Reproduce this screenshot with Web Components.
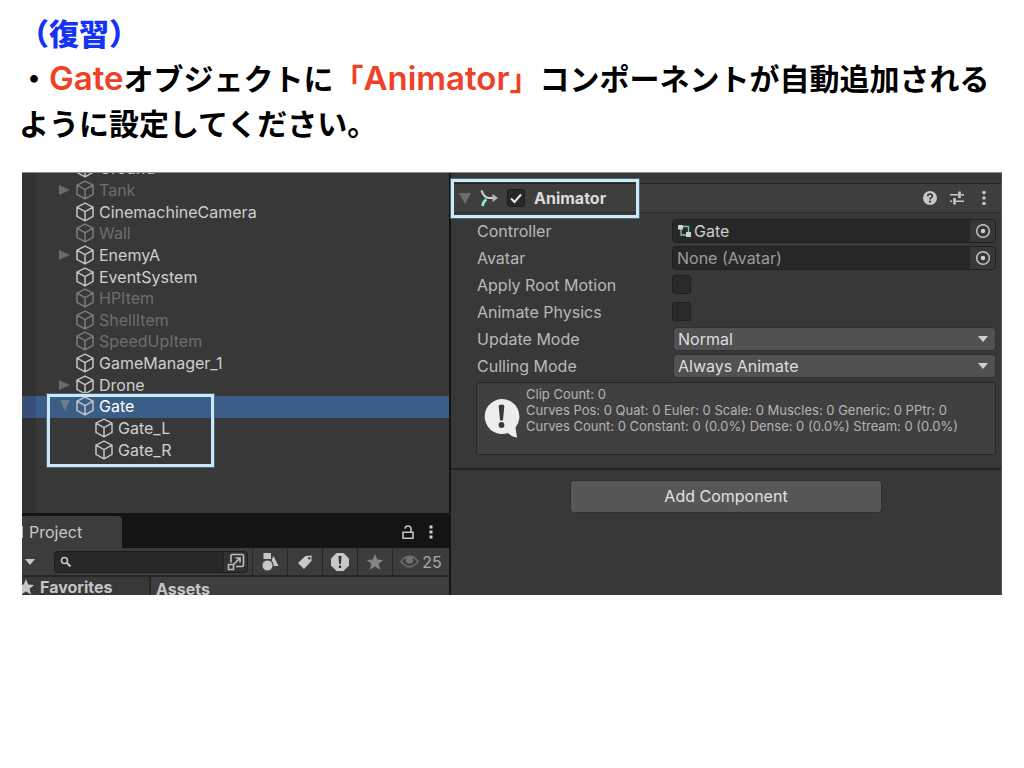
<!DOCTYPE html>
<html lang="ja">
<head>
<meta charset="utf-8">
<meta name="viewport" content="width=device-width, initial-scale=1">
<title>Animator コンポーネント</title>
<style>
  body { margin: 0; background: #fff; }
</style>
</head>
<body>
<lesson-slide>
  <lesson-note>
    <p><strong class="topic">（復習）</strong></p>
    <p>・<em>Gate</em>オブジェクトに<em>「Animator」</em>コンポーネントが自動追加されるように設定してください。</p>
  </lesson-note>
  <editor-window>
    <hierarchy-panel slot="hierarchy"></hierarchy-panel>
    <project-panel slot="project"></project-panel>
    <inspector-panel slot="inspector"></inspector-panel>
  </editor-window>
</lesson-slide>

<script>
const define = (name, html, setup) => {
  const template = document.createElement('template');
  template.innerHTML = `<style>*{box-sizing:border-box}</style>${html}`;
  customElements.define(name, class extends HTMLElement {
    connectedCallback() {
      if (this.shadowRoot) return;
      const root = this.attachShadow({ mode: 'open' });
      root.append(template.content.cloneNode(true));
      if (setup) setup(this, root);
    }
  });
};

define('lesson-slide', `
<style>
  :host { display: flex; flex-direction: column; gap: 27px; padding: 10px 22px 24px; }
</style>
<slot></slot>`);

define('lesson-note', `
<style>
  :host { display: block; margin: 0 -3px; color: #000; text-spacing-trim: space-all;
    font: 700 30px/45px "Noto Sans CJK JP", sans-serif; }
  ::slotted(p) { margin: 0; }
</style>
<slot></slot>`, host => {
  for (const el of host.querySelectorAll('em')) {
    el.style.cssText = 'font-style:normal;font-weight:600;font-size:33px;line-height:1;color:#ee4126;font-family:Inter,"Noto Sans CJK JP",sans-serif';
    el.innerHTML = el.textContent.replace(/[「」]/g, '<span style="font-size:30px;font-weight:700">$&</span>');
  }
  host.querySelector('.topic').style.color = '#1433f5';
});

define('editor-window', `
<style>
  :host { display: grid; grid-template-columns: minmax(0, 427fr) minmax(0, 551fr); column-gap: 2px;
    background: #141414; border-top: 1px solid #8c8c8c; overflow: hidden;
    font: 400 16px/20px Inter, sans-serif; color: #c8c8c8; }
  .left, .right { display: flex; flex-direction: column; min-width: 0; }
  .left slot, .right slot { display: flex; flex-direction: column; }
  slot[name=hierarchy], slot[name=inspector] { flex: 1; }
</style>
<div class="left"><slot name="hierarchy"></slot><slot name="project"></slot></div>
<div class="right"><slot name="inspector"></slot></div>`);

define('tree-row', `
<style>
  :host { flex: 1; display: flex; align-items: center; gap: 5px; padding: 0 0 1px 37px; min-height: 0; color: #cfcfcf; white-space: nowrap;
    background: linear-gradient(90deg, #323232 14px, #383838 14px); }
  :host([off]) { color: #6e6e6e; }
  :host([child]) { padding-left: 56px; }
  :host([selected]) { color: #fff; background: linear-gradient(90deg, #384f7a 14px, #3a5e87 14px); }
  svg { flex: none; display: block; }
  .cube { stroke: #c4c4c4; }
  :host([off]) .cube { stroke: #7c7c7c; }
  .arrow { visibility: hidden; fill: #6c6c6c; }
  :host([fold]) .arrow { visibility: visible; }
  :host([fold=open]) .arrow { transform: rotate(90deg); fill: #6a7b8b; }
</style>
<svg class="arrow" width="12" height="12"><path d="M0 1L11 6L0 11Z"/></svg>
<svg class="cube" width="18" height="20" fill="none" stroke-width="1.5" stroke-linejoin="round"><path d="M9 1.2L17 5.2V14.4L9 18.8L1 14.4V5.2ZM1 5.2L9 9.6L17 5.2M9 9.6V18.8"/></svg>
<slot></slot>`);

define('hierarchy-panel', `
<style>
  :host { display: flex; flex-direction: column; flex: 1; position: relative; overflow: hidden;
    background: linear-gradient(90deg, #323232 14px, #383838 14px); }
  .tree { display: flex; flex-direction: column; height: 303px; margin: -15px 0 52px; }
  .mark { position: absolute; left: 25px; top: 221px; width: 167px; height: 73px;
    border: 3px solid #c8eaf8; outline: 1px solid #4d6572; }
</style>
<div class="tree">
  <tree-row>Ground</tree-row>
  <tree-row off fold="closed">Tank</tree-row>
  <tree-row>CinemachineCamera</tree-row>
  <tree-row off>Wall</tree-row>
  <tree-row fold="closed">EnemyA</tree-row>
  <tree-row>EventSystem</tree-row>
  <tree-row off>HPItem</tree-row>
  <tree-row off>ShellItem</tree-row>
  <tree-row off>SpeedUpItem</tree-row>
  <tree-row>GameManager_1</tree-row>
  <tree-row fold="closed">Drone</tree-row>
  <tree-row selected fold="open">Gate</tree-row>
  <tree-row child>Gate_L</tree-row>
  <tree-row child>Gate_R</tree-row>
</div>
<div class="mark"></div>`);

define('project-panel', `
<style>
  :host { display: block; background: #141414; }
  button { font: inherit; color: inherit; background: none; border: 0; padding: 0; margin: 0;
    display: flex; align-items: center; justify-content: center; }
  svg { display: block; flex: none; }
  .tabs { display: flex; align-items: center; height: 35px; padding: 3px 11px 0 0; gap: 8px; }
  .tab { width: 100px; height: 32px; background: #3c3c3c; border-radius: 0 4px 0 0; justify-content: flex-start; gap: 6px; margin-right: auto; }
  .tab i { width: 1px; height: 12px; background: #b4b4b4; }
  .bar { display: flex; height: 27px; background: #3c3c3c; align-items: stretch; }
  .create { width: 16px; }
  .search { flex: 1; min-width: 0; display: flex; align-items: center; margin: 3px 4px 3px 16px; height: 22px;
    background: #282828; border: 1px solid #1c1c1c; border-radius: 4px; padding-left: 5px; overflow: hidden; }
  input { flex: 1; min-width: 0; font: inherit; color: inherit; background: none; border: 0; padding: 0 4px; outline: 0; }
  .pick { width: 24px; height: 20px; background: #323232; border-left: 1px solid #222; }
  .tool { width: 35px; border-left: 1px solid #262626; }
  .eye { width: 57px; gap: 3px; color: #a8a8a8; }
  .body { display: grid; grid-template-columns: 127px 1fr; height: 20px; overflow: hidden; border-top: 2px solid #272727; background: #3e3e3e;
    font-weight: 700; color: #c6c6c6; }
  .fav { display: flex; gap: 3px; align-items: center; background: #383838; overflow: hidden; padding-bottom: 2px; }
  .assets { border-left: 2px solid #272727; padding: 2px 0 0 5px; }
</style>
<div class="tabs">
  <button class="tab"><i></i>Project</button>
  <button aria-label="Lock"><svg width="16" height="16" fill="none" stroke="#c4c4c4" stroke-width="1.6"><path d="M3 8.2H13V14.2H3ZM5 4.6Q5.200 2 8 2Q11 2 11 5V8"/></svg></button>
  <button aria-label="Menu"><svg width="14" height="16" fill="#d0d0d0"><path d="M5.500 1.500h3v3h-3zM5.500 6.500h3v3h-3zM5.500 11.500h3v3h-3z"/></svg></button>
</div>
<div class="bar">
  <button class="create" aria-label="Create"><svg width="10" height="6"><path d="M0 0H10L5 6Z" fill="#c8c8c8"/></svg></button>
  <div class="search">
    <svg width="12" height="12" fill="none" stroke="#c8c8c8" stroke-width="1.6"><circle cx="4.500" cy="4.500" r="3"/><path d="M7 7L10.500 10.500" stroke-width="2"/></svg>
    <input type="search" aria-label="Search">
    <button class="pick" aria-label="Open search"><svg width="18" height="18" fill="none" stroke="#bdbdbd" stroke-width="1.6"><path d="M4 9.500V2.500Q4 1.500 5 1.500H15Q16.500 1.500 16.500 3V12Q16.500 13.500 15 13.500H9M1.500 11.500H6.500V16.500H1.500ZM6.500 11.500L12.500 5.500M8.500 5H13V9.500"/></svg></button>
  </div>
  <button class="tool" aria-label="Type filter"><svg width="18" height="18" fill="#c8c8c8"><path d="M2.500 0H10V6H2.500Z"/><circle cx="6.500" cy="12.500" r="5.500" stroke="#3c3c3c"/><path d="M12.500 3L17.500 13H12.500Q12.500 9 10.500 7Z"/></svg></button>
  <button class="tool" aria-label="Label filter"><svg width="16" height="16"><path fill="#c8c8c8" fill-rule="evenodd" d="M1 9L8.500 2L14.500 1.500V7L7 15ZM12.200 3a1.300 1.300 0 1 0 .1 0Z"/></svg></button>
  <button class="tool" aria-label="Log filter"><svg width="20" height="20"><path fill="#c8c8c8" d="M6.500 1H13.500L19 6.500V13.500L13.500 19H6.500L1 13.500V6.500Z"/><path fill="#333" d="M8.500 4h3l-.6 8h-1.800zM8.800 13.500h2.400v2.400h-2.400z"/></svg></button>
  <button class="tool" aria-label="Favorites"><svg width="18" height="18" fill="#858585"><path d="M9 1L11.300 6.500L17.200 6.900L12.700 10.800L14.200 16.700L9 13.500L3.800 16.700L5.300 10.800L.8 6.900L6.700 6.500Z"/></svg></button>
  <button class="tool eye" aria-label="Hidden packages"><svg width="19" height="13"><path d="M.8 6.500Q9.500 -4 18.200 6.500Q9.500 17 .8 6.500Z" fill="none" stroke="#707070" stroke-width="1.3"/><circle cx="9.500" cy="5" r="3.800" fill="#707070"/></svg>25</button>
</div>
<div class="body">
  <div class="fav"><svg width="15" height="16" fill="#c8c8c8"><path d="M4 0L6.200 5.500L12 5.900L7.600 9.700L9 15.500L4 12.400L-1 15.500L0 10V5.700L1.700 5.500Z"/></svg>Favorites</div>
  <div class="assets">Assets</div>
</div>`);

/* One label and one control per line; the three field types share this frame. */
const fieldCss = `<style>
  :host { display: grid; grid-template-columns: 195px minmax(0, 1fr); align-items: center; height: 27px; color: #b8b8b8; }
  .box { display: flex; align-items: center; height: 24px; background: #282828; border: 1px solid #202020; border-radius: 4px; padding-left: 4px; overflow: hidden; }
  input, select, button { font: inherit; color: inherit; margin: 0; border: 0; background: none; }
</style>`;

define('object-field', `${fieldCss}
<style>
  input { flex: 1; min-width: 0; padding: 0; outline: 0; color: #9c9c9c; height: 20px; }
  .icon { display: none; margin: 0 2px 0 1px; flex: none; }
  :host([asset]) .icon { display: block; }
  :host([asset]) input { color: #cecece; }
  button { width: 25px; height: 22px; padding: 0; background: #373737; display: flex; align-items: center; justify-content: center; }
</style>
<label for="f"></label>
<div class="box">
  <svg class="icon" width="14" height="14"><path d="M5 2.500H10.500V8M3 5V11H9" fill="none" stroke="#6ccdb4" stroke-width="1.300"/><path d="M0 1h5v4.500H0zM8 8h5v5H8z" fill="#d0d0d0"/></svg>
  <input id="f" type="text" readonly>
  <button aria-label="Select object"><svg width="16" height="16" fill="none"><circle cx="8" cy="8" r="6.300" stroke="#c4c4c4" stroke-width="1.500"/><circle cx="8" cy="8" r="2.200" fill="#d0d0d0"/></svg></button>
</div>`, (host, root) => {
  root.querySelector('label').textContent = host.getAttribute('label');
  root.querySelector('input').value = host.getAttribute('value');
});

define('toggle-field', `${fieldCss}
<style>
  input { appearance: none; width: 19px; height: 19px; background: #2a2a2a; border: 1px solid #1f1f1f; border-radius: 3px; }
</style>
<label for="f"></label><input id="f" type="checkbox">`, (host, root) => {
  root.querySelector('label').textContent = host.getAttribute('label');
});

define('select-field', `${fieldCss}
<style>
  .menu { display: grid; align-items: center; margin: 0 1px 0 2px; }
  select, svg { grid-area: 1 / 1; }
  select { appearance: none; width: 100%; height: 22px; padding: 0 24px 0 4px; background: #515151; color: #dedede;
    border-radius: 3px; box-shadow: 0 0 0 1px #303030; }
  svg { justify-self: end; margin-right: 7px; pointer-events: none; }
</style>
<label for="f"></label>
<div class="menu"><select id="f"><option></option></select><svg width="10" height="6"><path d="M0 0H10L5 6Z" fill="#d0d0d0"/></svg></div>`, (host, root) => {
  root.querySelector('label').textContent = host.getAttribute('label');
  root.querySelector('option').textContent = host.getAttribute('value');
});

define('help-box', `
<style>
  :host { display: flex; gap: 6px; height: 73px; margin: 3px 0 0 -1px; padding: 3px 7px 0; background: #404040;
    border: 1px solid #262626; border-radius: 3px; font-size: 13px; line-height: 16px; color: #b4b4b4; }
  svg { flex: none; margin-top: 12px; }
  ::slotted(p) { margin: 0; white-space: nowrap; }
</style>
<svg width="36" height="40"><path fill="#ededed" d="M17.500 1A17.500 17.500 0 1 0 24 35Q28 39 33 39.500L31.500 29.500A17.500 17.500 0 0 0 17.500 1Z"/><path fill="#3a3a3a" d="M14.700 8.500Q14.700 6.500 17.500 6.500Q20.300 6.500 20.300 8.500L19 22Q17.500 23.500 16 22Z"/><circle cx="17.500" cy="27" r="2.900" fill="#3a3a3a"/></svg>
<div><slot></slot></div>`);

define('inspector-panel', `
<style>
  :host { display: block; flex: 1; position: relative; background: #383838; border-right: 1px solid #555; }
  button, input { font: inherit; color: inherit; margin: 0; border: 0; padding: 0; background: none; }
  svg { display: block; }
  header { display: flex; align-items: center; gap: 9px; margin-top: 10px; height: 30px; padding: 0 9px 0 8px;
    background: #3e3e3e; border-top: 1px solid #232323; border-bottom: 1px solid #303030; }
  h2 { margin: 0 auto 0 0; font-size: 16px; line-height: 20px; font-weight: 700; color: #dcdcdc; }
  h2 label { display: block; }
  .check { display: grid; }
  .check > * { grid-area: 1 / 1; }
  .check input { appearance: none; width: 18px; height: 18px; background: #282828; border: 1px solid #1c1c1c; border-radius: 3px; }
  .check svg { pointer-events: none; visibility: hidden; }
  .check input:checked + svg { visibility: visible; }
  .actions { display: flex; gap: 11px; }
  .fields { padding: 4px 5px 13px 26px; border-bottom: 2px solid #222; }
  .add { display: block; width: 310px; max-width: 90%; height: 31px; margin: 11px auto 0; padding-bottom: 2px; background: #575757; color: #e0e0e0; border-radius: 3px; box-shadow: 0 0 0 1px #303030; }
  .mark { position: absolute; left: 0; top: 6px; width: 188px; height: 39px; border: 3px solid #c8eaf8; outline: 1px solid #4d6572; pointer-events: none; }
</style>
<header>
  <button aria-label="Fold"><svg width="12" height="11"><path d="M0 0H12L6 11Z" fill="#6c6c6c"/></svg></button>
  <svg width="18" height="18" fill="none" stroke-width="2.200"><path d="M2.500 17Q3.500 12 6.500 10.500" stroke="#7ff0d0" stroke-width="2.800"/><path d="M1.500 1.500Q4 9 9 9H14" stroke="#d0d0d0"/><path d="M12.500 5L18 9L12.500 13Z" fill="#b8b8b8"/></svg>
  <span class="check"><input id="on" type="checkbox" checked><svg width="18" height="18" fill="none" stroke="#e8e8e8" stroke-width="2"><path d="M4 9.500L7.500 13L14 5.500"/></svg></span>
  <h2><label for="on">Animator</label></h2>
  <div class="actions">
    <button aria-label="Help"><svg width="16" height="16"><circle cx="8" cy="8" r="7" fill="#c8c8c8"/><path d="M5.700 6.300Q5.700 4 8 4Q10.300 4 10.300 6Q10.300 7.200 9 7.800Q8 8.300 8 9.600" fill="none" stroke="#333" stroke-width="1.600"/><circle cx="8" cy="11.700" r="1.100" fill="#333"/></svg></button>
    <button aria-label="Presets"><svg width="16" height="16" fill="none" stroke="#c8c8c8"><path d="M1 4.800H9M12 4.800H15M1 11.200H3M7 11.200H15" stroke-width="1.600"/><path d="M10.500 1.500V8M5.500 8V14.500" stroke-width="2.600"/></svg></button>
    <button aria-label="More"><svg width="16" height="16" fill="#c8c8c8"><circle cx="8" cy="2.500" r="1.800"/><circle cx="8" cy="8" r="1.800"/><circle cx="8" cy="13.500" r="1.800"/></svg></button>
  </div>
</header>
<div class="fields">
  <object-field label="Controller" value="Gate" asset></object-field>
  <object-field label="Avatar" value="None (Avatar)"></object-field>
  <toggle-field label="Apply Root Motion"></toggle-field>
  <toggle-field label="Animate Physics"></toggle-field>
  <select-field label="Update Mode" value="Normal"></select-field>
  <select-field label="Culling Mode" value="Always Animate"></select-field>
  <help-box>
    <p>Clip Count: 0</p>
    <p>Curves Pos: 0 Quat: 0 Euler: 0 Scale: 0 Muscles: 0 Generic: 0 PPtr: 0</p>
    <p>Curves Count: 0 Constant: 0 (0.0%) Dense: 0 (0.0%) Stream: 0 (0.0%)</p>
  </help-box>
</div>
<button class="add">Add Component</button>
<div class="mark"></div>`);
</script>
</body>
</html>
